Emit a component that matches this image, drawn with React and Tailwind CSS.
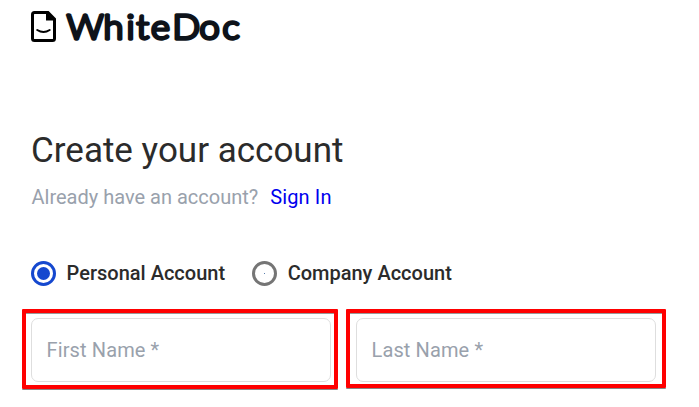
function Logo() {
  return (
    <svg width="220" height="56" viewBox="0 0 220 56" role="img" aria-label="WhiteDoc">
      <path d="M3.5 12.5H17L23.5 19V38.5Q23.5 40.5 21.5 40.5H3.5Q1.5 40.5 1.5 38.5V14.5Q1.5 12.5 3.5 12.5Z" fill="none" stroke="#000" strokeWidth="3" />
      <path d="M15 12L24 20.5H15Z" fill="#000" />
      <path d="M6.2 30Q12.5 34 18.7 30" fill="none" stroke="#000" strokeWidth="2" strokeLinecap="round" />
      <text transform="scale(1.08 1)" x="33.1 67.1 88.4 97.6 111.2 131 156.1 177.4" y="39.3" className="font-['Lato',sans-serif] text-[33.5px] font-light" fill="#0e131a" stroke="#0e131a" strokeWidth="3.3" strokeLinejoin="round">WhiteDoc</text>
    </svg>
  );
}

function Field({ label }) {
  return <div className="flex h-[64px] w-[300px] items-center rounded-[7px] border border-[#dedede] pl-[14.5px] tracking-[0.12px]">{label}</div>;
}

export default function App() {
  return (
    <main className="h-[407px] w-[699px] overflow-hidden bg-white pl-[22px] font-['Roboto',sans-serif]">
      <header className="h-[56px] pl-[9px]"><Logo /></header>
      <h1 className="mt-[73px] pl-[9px] text-[35px] leading-[44px] text-[#2b2b2b]">Create your account</h1>
      <p className="mt-[11px] flex gap-3 pl-[9.5px] text-[20px] leading-[26px] text-[#99a1ac]">
        <span>Already have an account?</span><a className="tracking-[0.12px] text-[#0000ee]">Sign In</a>
      </p>
      <div className="mt-[50px] flex h-[26px] items-center gap-[27px] pl-[9px] text-[20px] font-medium text-[#2b2b2b]">
        <label className="flex items-center gap-[10.6px]"><span className="flex size-[25px] items-center justify-center rounded-full border-3 border-[#1548cf]"><i className="size-[13px] rounded-full bg-[#1548cf]" /></span>Personal Account</label>
        <label className="flex items-center gap-[10.6px]"><span className="flex size-[25px] items-center justify-center rounded-full border-3 border-[#757575]"><i className="size-px bg-[#5b7fae]" /></span>Company Account</label>
      </div>
      <div className="mt-[23px] flex items-start gap-[8px] text-[20px] text-[#99a1ac]">
        <div className="h-[80px] w-[316px] rounded-[1px] border-4 border-[#f00] pl-[5px] pt-[5px] shadow-[0_1px_0_#888,inset_0_1px_0_#999]"><Field label="First Name *" /></div>
        <div className="h-[79px] w-[320px] rounded-[1px] border-4 border-[#f00] pl-[6px] pt-[5px] shadow-[0_1px_0_#888,inset_0_1px_0_#999]"><Field label="Last Name *" /></div>
      </div>
    </main>
  );
}
